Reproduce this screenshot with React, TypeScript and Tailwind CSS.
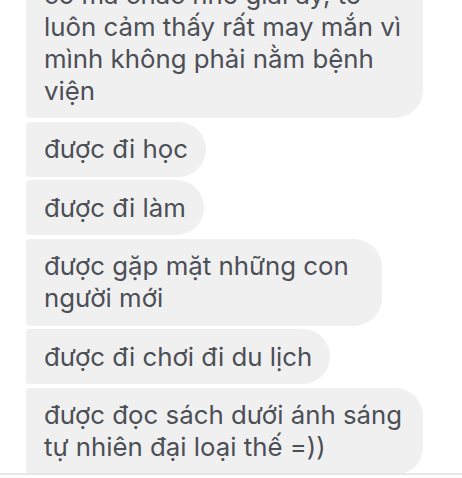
import React from "react";

const messages: { text: string; width?: string }[] = [
  {
    text: "có mà chắc nhờ giải ấy, tớ luôn cảm thấy rất may mắn vì mình không phải nằm bệnh viện",
  },
  { text: "được đi học" },
  { text: "được đi làm" },
  { text: "được gặp mặt những con người mới", width: "w-[356px]" },
  { text: "được đi chơi đi du lịch" },
  { text: "được đọc sách dưới ánh sáng tự nhiên đại loại thế =))" },
];

export default function App() {
  return (
    <div
      className="flex h-[478px] w-[462px] flex-col overflow-hidden bg-white"
      style={{ fontFamily: "Inter, 'Noto Sans', sans-serif" }}
    >
      {/* Message list */}
      <div className="flex-1 overflow-hidden">
        <div className="-mt-[33px] flex flex-col items-start gap-[3.5px] pl-[26px]">
          {messages.map((m, i) => (
            <div
              key={i}
              className={`max-w-[397px] rounded-l-[4px] rounded-r-[28px] bg-[#f1f0f0] px-[18px] py-[11.5px] text-[25.8px] leading-[32px] text-[#4b4f56] ${
                m.width ?? "w-fit"
              }`}
            >
              {m.text}
            </div>
          ))}
        </div>
      </div>

      {/* Composer edge */}
      <div className="h-[5px] border-t-2 border-[#e6e6e6] bg-white" />
    </div>
  );
}
